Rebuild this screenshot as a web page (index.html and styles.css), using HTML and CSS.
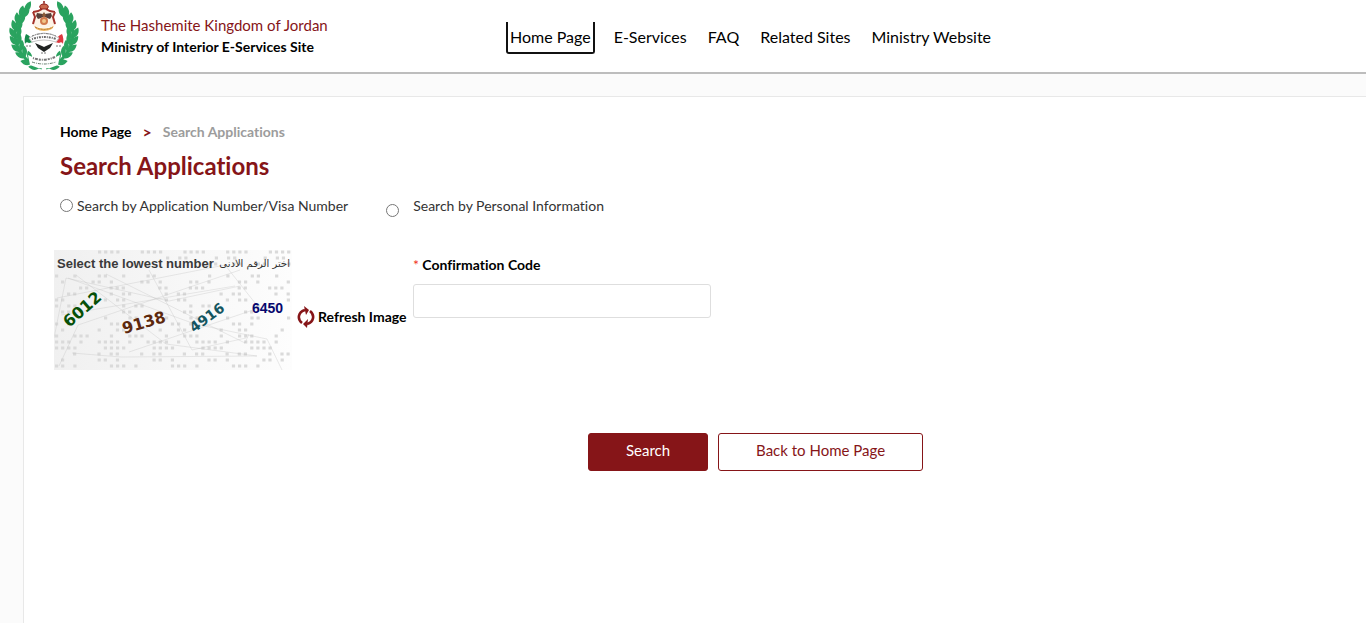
FILE: index.html
```
<!DOCTYPE html>
<html lang="en">
<head>
<meta charset="utf-8">
<meta name="viewport" content="width=device-width, initial-scale=1">
<title>Search Applications</title>
<link rel="stylesheet" href="styles.css">
</head>
<body>
<header class="site-header">
  <div class="brand">
    <svg class="emblem" viewBox="0 0 72 72" role="img" aria-label="Ministry of Interior emblem">
      <defs>
        <path id="leaf" d="M0 1C-5 0-7-4-6-9C-1-7 2-4 0 1Z"/>
        <path id="leaf-in" d="M0 1C0-4 3-8 7-9C8-4 5 0 0 1Z"/>
        <g id="branch" fill="#2aa35f">
          <path d="M34 68C17 63 7 49 7 33C8 22 13 13 20 6" fill="none" stroke="#2aa35f" stroke-width="3"/>
          <use href="#leaf" transform="translate(18 11) rotate(60)"/>
          <use href="#leaf" transform="translate(13 16) rotate(45)"/>
          <use href="#leaf" transform="translate(10 23) rotate(28)"/>
          <use href="#leaf" transform="translate(8 30) rotate(15)"/>
          <use href="#leaf" transform="translate(7 37) rotate(5)"/>
          <use href="#leaf" transform="translate(9 44) rotate(-8)"/>
          <use href="#leaf" transform="translate(12 51) rotate(-20)"/>
          <use href="#leaf" transform="translate(17 57) rotate(-32)"/>
          <use href="#leaf" transform="translate(23 63) rotate(-45)"/>
          <use href="#leaf" transform="translate(31 67) rotate(-55)"/>
          <use href="#leaf-in" transform="translate(13 17) rotate(10)"/>
          <use href="#leaf-in" transform="translate(10 24)"/>
          <use href="#leaf-in" transform="translate(8 31) rotate(-6)"/>
          <use href="#leaf-in" transform="translate(8 38) rotate(-14)"/>
          <use href="#leaf-in" transform="translate(9 45) rotate(-22)"/>
          <use href="#leaf-in" transform="translate(12 51) rotate(-28)"/>
          <use href="#leaf-in" transform="translate(16 57) rotate(-38)"/>
          <use href="#leaf-in" transform="translate(22 62) rotate(-48)"/>
        </g>
      </defs>
      <use href="#branch"/>
      <use href="#branch" transform="matrix(-1 0 0 1 72 0)"/>
      <path d="M34 10Q30 12 25 12L26 17L24 25Q30 28 36 28Q42 28 48 25L46 17L47 12Q42 12 38 10Z" fill="#fdf3e6"/>
      <path d="M34 9Q30 12 25 12M38 9Q42 12 47 12M25 12L27 17L25 24M47 12L45 17L47 24" fill="none" stroke="#a3322b" stroke-width="2"/>
      <path d="M36 1V4M35 2H37" stroke="#8d1b16"/>
      <path d="M33 9C30 6 33 4 36 4C39 4 42 6 39 9Z" fill="#c9694f" stroke="#8d1b16"/>
      <path d="M35 14L29 13L28 16L30 19L33 18L35 17ZM37 14L43 13L44 16L42 19L39 18L37 17Z" fill="#57403a"/>
      <path d="M36 12L38 15L36 18L34 15Z" fill="#8b5a36"/>
      <circle cx="36" cy="21" r="4" fill="#d17a4c"/>
      <circle cx="36" cy="21" r="2" fill="#f1c68a"/>
      <path d="M26 26Q36 31 46 26L44 29Q36 33 28 29Z" fill="#edb75e"/>
      <path d="M27 27Q36 32 45 27" fill="none" stroke="#b5773b" stroke-dasharray="2 1"/>
      <path d="M18 34Q23 36 25 42L21 43Q18 41 17 44Q16 38 18 34Z" fill="#16894c"/>
      <path d="M54 34Q49 36 47 42L51 43Q54 41 55 44Q56 38 54 34Z" fill="#dc3940"/>
      <path d="M27 43L34 46L36 47L38 46L45 43L42 48L36 52L30 48Z" fill="#202322"/>
      <path d="M21 38Q36 28 51 38L48 42Q36 38 24 42Z" fill="#fff" stroke="#c6c6c6"/>
      <path d="M24 36Q36 31 48 36" fill="none" stroke="#777" stroke-dasharray="2 1 1 1 3 1"/>
      <path d="M24 39Q36 35 48 39" fill="none" stroke="#6b6b6b" stroke-width="2" stroke-dasharray="1 1 2 1"/>
      <path d="M18 46H24M48 46H54M33 53H39" stroke="#777" stroke-dasharray="2 1"/>
      <path d="M20 55Q36 63 52 55L50 65Q36 72 22 65Z" fill="#fff"/>
      <path d="M25 58Q36 62 47 57" fill="none" stroke="#777" stroke-width="2" stroke-dasharray="1 1 3 1 2 1"/>
      <path d="M24 62Q36 66 48 62" fill="none" stroke="#5f7a69" stroke-dasharray="3 1 1 1"/>
    </svg>
    <div>
      <p class="brand-country">The Hashemite Kingdom of Jordan</p>
      <p class="brand-site">Ministry of Interior E-Services Site</p>
    </div>
  </div>
  <nav class="main-nav" aria-label="Main">
    <a class="current" href="#">Home Page</a>
    <a href="#">E-Services</a>
    <a href="#">FAQ</a>
    <a href="#">Related Sites</a>
    <a href="#">Ministry Website</a>
  </nav>
</header>

<main class="panel">
  <nav class="breadcrumb" aria-label="Breadcrumb">
    <a href="#">Home Page</a><span class="sep">&gt;</span><span class="here">Search Applications</span>
  </nav>
  <h1>Search Applications</h1>

  <form>
    <div class="modes">
      <div class="mode">
        <input type="radio" name="mode" id="by-number">
        <label for="by-number">Search by Application Number/Visa Number</label>
      </div>
      <div class="mode mode-person">
        <input type="radio" name="mode" id="by-person">
        <label for="by-person">Search by Personal Information</label>
      </div>
    </div>

    <div class="verify">
      <svg class="captcha" viewBox="0 0 238 120" role="img" aria-label="Select the lowest number">
        <defs>
          <linearGradient id="shade"><stop offset="0" stop-color="#f0f0f0"/><stop offset="1" stop-color="#fdfdfd"/></linearGradient>
        </defs>
        <rect width="238" height="120" fill="url(#shade)"/>
        <g stroke="#dadada" stroke-width="3.2" fill="none">
          <path d="M44 2H238" stroke-dasharray="3.2 2.9 3.2 2.9 3.2 2.9 3.2 21.2"/>
          <path d="M112 8H238" stroke-dasharray="3.2 9 3.2 2.9 3.2 27.3"/>
          <path d="M154 14H238" stroke-dasharray="3.2 2.9 3.2 15.1"/>
          <path d="M1 26H110M154 26H236" stroke-dasharray="3.2 15.1 3.2 21.2 3.2 2.9"/>
          <path d="M7 32H236" stroke-dasharray="3.2 27.3 3.2 2.9 3.2 9"/>
          <path d="M25 38H236" stroke-dasharray="3.2 2.9 3.2 21.2 3.2 2.9 3.2 2.9 3.2 33.4"/>
          <path d="M13 44H236" stroke-dasharray="3.2 2.9 3.2 33.4 3.2 9"/>
          <path d="M1 50H236" stroke-dasharray="3.2 2.9 3.2 39.5 3.2 9"/>
          <path d="M1 56H236" stroke-dasharray="3.2 9 3.2 2.9 3.2 45.6"/>
          <path d="M7 62H236" stroke-dasharray="3.2 2.9 3.2 51.7"/>
          <path d="M50 68H238" stroke-dasharray="3.2 21.2 3.2 2.9 3.2 27.3"/>
          <path d="M1 74H238" stroke-dasharray="3.2 9 3.2 39.5 3.2 2.9"/>
          <path d="M7 80H238" stroke-dasharray="3.2 33.4 3.2 15.1 3.2 2.9"/>
          <path d="M1 86H238" stroke-dasharray="3.2 15.1 3.2 2.9 3.2 2.9 3.2 21.2"/>
          <path d="M1 92H238" stroke-dasharray="3.2 2.9 3.2 2.9 3.2 9 3.2 15.1 3.2 2.9"/>
          <path d="M1 98H238" stroke-dasharray="3.2 2.9 3.2 2.9 3.2 2.9 3.2 27.3"/>
          <path d="M19 104H238" stroke-dasharray="3.2 21.2 3.2 9 3.2 2.9"/>
          <path d="M7 110H238" stroke-dasharray="3.2 33.4 3.2 2.9 3.2 9"/>
          <path d="M1 116H238" stroke-dasharray="3.2 2.9 3.2 9 3.2 33.4 3.2 2.9"/>
        </g>
        <g stroke="#bdbdbd" stroke-opacity=".55" stroke-width=".6" fill="none">
          <path d="M0 88L12 28L115 51L186 36M5 116L24 75L186 20M7 65L181 36M14 28L141 74L213 89L228 120"/>
          <path d="M22 25L112 94L203 106L67 107L18 103M52 24L191 93L195 84M95 20L138 100L192 88M3 48L171 15L205 58L75 102"/>
        </g>
        <g font-family="Liberation Sans, Arial, sans-serif" font-weight="700" font-size="13">
          <text x="3" y="18" fill="#3a3a3a">Select the lowest number</text>
          <text x="236" y="17" fill="#333" font-family="DejaVu Sans, sans-serif" font-size="10" font-weight="400" direction="rtl">اختر الرقم الادنى</text>
          <text x="198" y="63" fill="#07076e" font-size="14">6450</text>
        </g>
        <g font-family="DejaVu Sans, sans-serif" font-weight="700" font-size="16">
          <text transform="translate(15 78) rotate(-41)" fill="#075007">6012</text>
          <text transform="translate(70 84) rotate(-16)" fill="#5d290e">9138</text>
          <text transform="translate(140 83) rotate(-36)" font-size="14" fill="#145560">4916</text>
        </g>
      </svg>
      <button class="refresh" type="button">
        <svg class="refresh-icon" viewBox="0 0 18 24" aria-hidden="true">
          <path d="M5 18C0 14 1 7 8 5M13 6C18 10 17 17 10 19" fill="none" stroke="#861518" stroke-width="2.6"/>
          <path d="M7 1L12 5L9 10ZM11 14L6 19L10 23Z" fill="#861518"/>
        </svg>
        <span>Refresh Image</span>
      </button>
      <div class="code-field">
        <label for="code"><span class="required">*</span> Confirmation Code</label>
        <input type="text" id="code" autocomplete="off">
      </div>
    </div>

    <div class="actions">
      <button class="btn btn-primary" type="submit">Search</button>
      <button class="btn btn-outline" type="button">Back to Home Page</button>
    </div>
  </form>
</main>
</body>
</html>
```

FILE: styles.css
```
* { box-sizing: border-box; }

html { overflow-x: hidden; }

body {
  margin: 0;
  min-height: 100vh;
  display: flex;
  flex-direction: column;
  background: #fbfbfb;
  color: #000;
  font: 15px/20px Lato, "Open Sans", sans-serif;
  font-variant-ligatures: none;
}

p, h1 { margin: 0; }
a { color: inherit; text-decoration: none; }
button, input { font: inherit; }

.site-header {
  display: grid;
  grid-template-columns: 506px 1fr;
  background: #fff;
  border-bottom: 2px solid #bdbdbd;
}

.brand {
  display: flex;
  align-items: flex-start;
  gap: 21px;
  padding-left: 8px;
}
.brand > div { padding-top: 15px; }
.emblem { width: 72px; height: 72px; }
.brand-country { color: #861518; line-height: 21px; }
.brand-site { font-size: 14px; font-weight: 700; line-height: 21px; }

.main-nav {
  display: flex;
  align-items: flex-start;
  gap: 21px;
  padding-top: 22px;
  font-size: 16px;
  white-space: nowrap;
}
.main-nav a { padding-top: 5px; line-height: 20px; }
.main-nav .current {
  height: 32px;
  margin-right: -2px;
  padding: 5px 2px 0;
  border: 2px solid #111;
  border-top: 0;
  border-radius: 0 0 3px 3px;
}

.panel {
  flex: 1;
  margin: 22px 0 0 23px;
  padding: 24px 36px;
  background: #fff;
  border: 1px solid #e8e8e8;
  border-width: 1px 0 0 1px;
}

.breadcrumb {
  display: flex;
  gap: 11px;
  font-size: 14px;
  font-weight: 700;
  line-height: 22px;
}
.sep { color: #861518; font-size: 16px; }
.here { color: #9c9c9c; }

h1 {
  margin-top: 7px;
  color: #861518;
  font-size: 24px;
  font-weight: 700;
  line-height: 32px;
}

.modes {
  display: flex;
  gap: 38px;
  margin-top: 12px;
  color: #333;
  font-size: 14px;
}
.mode { display: flex; align-items: center; gap: 4px; }
.mode input { width: 13px; height: 13px; margin: 0; }
.mode-person { gap: 14px; }
.mode-person input { margin-top: 10px; }

.verify {
  display: flex;
  align-items: flex-start;
  margin: 33px 0 0 -6px;
}
.captcha { width: 238px; height: 120px; }
.refresh {
  display: flex;
  align-items: center;
  gap: 3px;
  width: 121px;
  margin-top: 55px;
  padding: 0 0 0 5px;
  border: 0;
  background: none;
  color: #000;
  font-size: 14px;
  font-weight: 700;
  white-space: nowrap;
}
.refresh-icon { width: 18px; height: 24px; }

.code-field { width: 298px; padding-top: 4px; }
.code-field label { display: block; font-size: 14px; font-weight: 700; line-height: 22px; }
.required { color: #f0321e; font-weight: 400; }
.code-field input {
  display: block;
  width: 100%;
  height: 34px;
  margin-top: 8px;
  padding: 0 10px;
  border: 1px solid #dedede;
  border-radius: 3px;
}

.actions {
  display: flex;
  justify-content: center;
  gap: 10px;
  margin-top: 63px;
  padding-left: 121px;
}
.btn {
  height: 38px;
  padding: 0 37px 4px;
  border: 1px solid #861518;
  border-radius: 3px;
}
.btn-primary { background: #861518; color: #fff; }
.btn-outline { background: #fff; color: #861518; }
```
